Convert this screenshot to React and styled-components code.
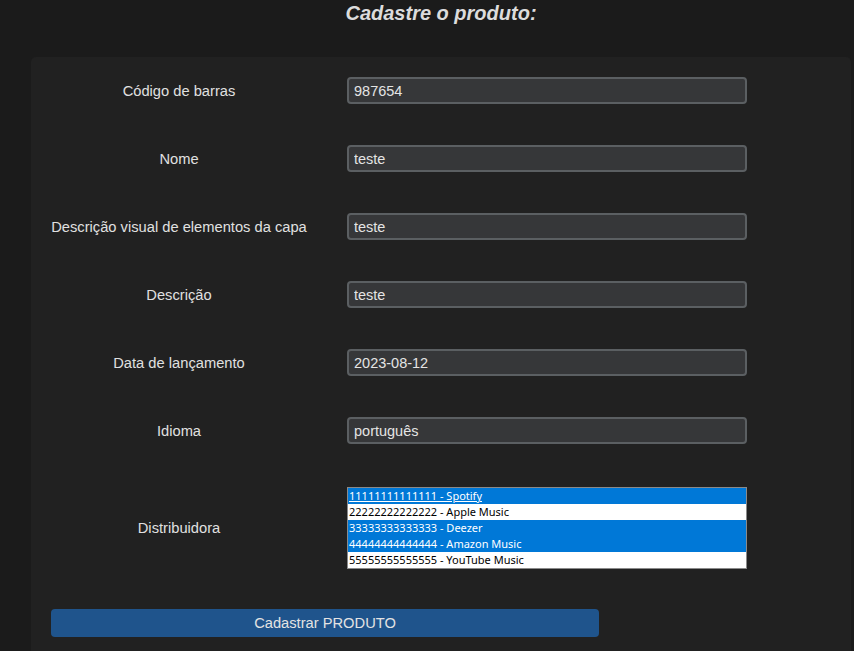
import React from "react";
import styled, { createGlobalStyle } from "styled-components";

const GlobalStyle = createGlobalStyle`
  html, body { margin: 0; padding: 0; background: #1b1b1b; overflow: hidden; }
  body { font-family: "Liberation Sans", Arial, sans-serif; color: #e2e2e2; }
  * { box-sizing: border-box; }
`;

const Page = styled.div`
  height: 651px;
  padding: 0 3px 0 31px;
  display: flex;
  flex-direction: column;
`;

const Title = styled.h2`
  margin: 0;
  padding-top: 1px;
  height: 57px;
  font-size: 20px;
  line-height: 24px;
  font-weight: bold;
  font-style: italic;
  text-align: center;
  color: #dcdcdc;
`;

const Panel = styled.form`
  flex: 1;
  background: #212121;
  border-radius: 5px 5px 0 0;
  padding: 20px 20px 0 20px;
  display: flex;
  flex-direction: column;
  gap: 41px;
`;

const Row = styled.div`
  display: grid;
  grid-template-columns: 256px 400px;
  column-gap: 40px;
  align-items: center;
  margin-top: ${(p) => p.$shift || 0}px;
`;

const Label = styled.label`
  text-align: center;
  font-size: 14.7px;
  color: #e0e0e0;
`;

const Input = styled.input`
  height: 27px;
  width: 400px;
  background: #363739;
  border: 2px solid #5b5f62;
  border-radius: 4px;
  padding: 0 5px;
  font-family: "Liberation Sans", Arial, sans-serif;
  font-size: 14.5px;
  color: #e4e4e4;
  outline: none;
`;

const ListBox = styled.div`
  width: 400px;
  border: 1px solid #8a8a8a;
  background: #ffffff;
  display: flex;
  flex-direction: column;
`;

const Option = styled.div`
  height: 16px;
  line-height: 16px;
  padding-left: 1px;
  font-family: "Noto Sans", "Open Sans", sans-serif;
  font-size: 11px;
  white-space: nowrap;
  background: ${(p) => (p.$selected ? "#0078d7" : "#ffffff")};
  color: ${(p) => (p.$selected ? "#ffffff" : "#000000")};
  text-decoration: ${(p) => (p.$focused ? "underline" : "none")};
`;

const Button = styled.button`
  width: 548px;
  height: 28px;
  margin-top: -1px;
  border: none;
  border-radius: 4px;
  background: #1f548c;
  color: #e3e3e3;
  font-family: "Liberation Sans", Arial, sans-serif;
  font-size: 14.7px;
  padding: 0;
  cursor: pointer;
`;

const fields = [
  ["Código de barras", "987654"],
  ["Nome", "teste"],
  ["Descrição visual de elementos da capa", "teste"],
  ["Descrição", "teste"],
  ["Data de lançamento", "2023-08-12"],
  ["Idioma", "português"],
];

const distribuidoras = [
  ["11111111111111 - Spotify", true],
  ["22222222222222 - Apple Music", false],
  ["33333333333333 - Deezer", true],
  ["44444444444444 - Amazon Music", true],
  ["55555555555555 - YouTube Music", false],
];

export default function App() {
  return (
    <>
      <GlobalStyle />
      <Page>
        <Title>Cadastre o produto:</Title>
        <Panel onSubmit={(e) => e.preventDefault()}>
          {fields.map(([label, value], i) => (
            <Row key={i}>
              <Label>{label}</Label>
              <Input defaultValue={value} />
            </Row>
          ))}
          <Row $shift={2}>
            <Label>Distribuidora</Label>
            <ListBox role="listbox" aria-multiselectable="true">
              {distribuidoras.map(([text, sel], i) => (
                <Option key={i} role="option" aria-selected={sel} $selected={sel} $focused={i === 0}>
                  {text}
                </Option>
              ))}
            </ListBox>
          </Row>
          <Button type="submit">Cadastrar PRODUTO</Button>
        </Panel>
      </Page>
    </>
  );
}
